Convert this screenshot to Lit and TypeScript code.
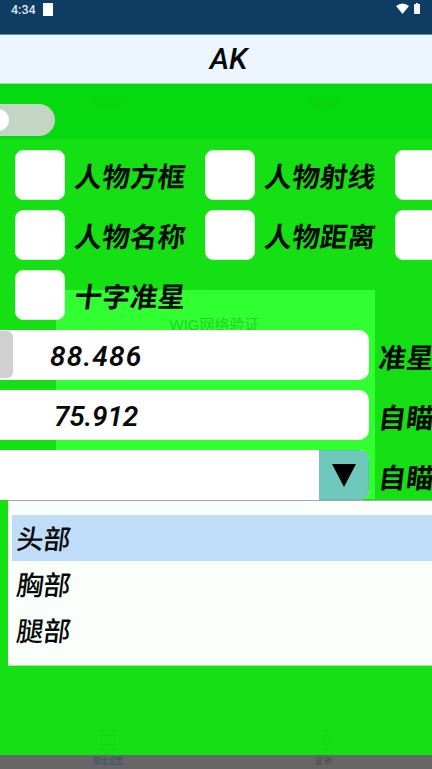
import { LitElement, html, css } from "lit";
import { customElement } from "lit/decorators.js";

@customElement("app-root")
export class AppRoot extends LitElement {
  static styles = css`
    :host { display: flex; flex-direction: column; width: 432px; height: 769px; overflow: hidden; position: relative; font-family: "Noto Sans CJK SC", "Noto Sans", sans-serif; color: #060a08; }
    .status { height: 34px; flex: none; background: #0e3c62; display: flex; align-items: flex-start; padding: 0 11px; box-sizing: border-box; color: #dfe6ec; }
    .time { font: 500 12.5px/20px Roboto, sans-serif; width: 32px; }
    .notif { width: 10px; height: 13px; margin-top: 3px; background: #fff; }
    .sys { margin-left: auto; display: flex; gap: 5px; margin-top: 3px; margin-right: 1px; }
    .header { height: 50px; flex: none; box-sizing: border-box; background: #edf5fe; border-top: 1px solid #6f8ca6; border-bottom: 1px solid #a9d8a0; display: flex; align-items: center; justify-content: center; padding-left: 25px; }
    .title { font: italic 500 30px/1 Roboto, sans-serif; color: #05080a; }
    .main { flex: 1; position: relative; overflow: hidden; background: linear-gradient(#05d90f 55px, #14e014 55px); }
    .ghost { position: absolute; color: #10cf14; font-size: 7.5px; line-height: 10px; white-space: nowrap; }
    .g1 { left: 93px; top: 13px; }
    .g2 { left: 308px; top: 13px; }
    .dialog { position: absolute; left: 56px; top: 206px; width: 319px; height: 209px; background: #32ff32; }
    .dialog-title { position: absolute; left: 0; right: 0; top: 25px; text-align: center; font: 400 15px/20px "Liberation Sans", "Noto Sans CJK SC", sans-serif; color: #1bd622; transform: translateX(-1px); }
    .g-icon { position: absolute; top: 651px; width: 14px; height: 10px; border: 1px solid #11d414; box-sizing: border-box; }
    .gi1 { left: 101px; }
    .gi2 { left: 322px; border-radius: 50%; width: 10px; }
    .content { position: relative; display: flex; flex-direction: column; }
    .toggle-row { height: 66px; padding-top: 20px; box-sizing: border-box; }
    .toggle { width: 87px; height: 32px; margin-left: -32px; border-radius: 16px; background: #c3d5c3; position: relative; }
    .knob { position: absolute; left: 19px; top: 5px; width: 22px; height: 22px; border-radius: 50%; background: #fff; }
    .checks { display: grid; grid-template-columns: repeat(3, 190px); grid-auto-rows: 50px; row-gap: 10px; padding-left: 15px; width: 600px; }
    .check { display: flex; align-items: center; gap: 10px; white-space: nowrap; }
    .check .label { margin-top: 2px; }
    .box { flex: none; width: 50px; height: 50px; box-sizing: border-box; border-radius: 8px; background: #fff; border: 1px solid #dbe8db; }
    .label { display: inline-block; font: 700 27.5px/1 "Noto Sans CJK SC", "Noto Sans", sans-serif; letter-spacing: 0.2px; transform: skewX(-7deg); }
    .fields { display: flex; flex-direction: column; gap: 10px; margin-top: 10px; }
    .field { display: flex; align-items: center; gap: 10px; height: 50px; white-space: nowrap; }
    .field .label { margin-top: 4px; }
    .input { position: relative; flex: none; width: 369px; height: 50px; box-sizing: border-box; background: #fff; border-radius: 0 10px 10px 0; display: flex; align-items: center; }
    .value { font: italic 600 28px/1 Roboto, sans-serif; letter-spacing: 1.2px; color: #0a0a0a; margin-top: 4px; }
    .v1 { margin-left: 50px; }
    .v2 { margin-left: 54px; letter-spacing: -0.2px; }
    .thumb { position: absolute; left: 0; top: 1px; width: 13px; height: 47px; background: #d0d0d0; border-radius: 0 6px 6px 0; }
    .drop { justify-content: flex-end; }
    .arrow { width: 50px; height: 50px; box-sizing: border-box; background: #6fc8bc; border-radius: 0 10px 10px 0; border: 1px solid #64bdb0; border-left: none; display: flex; align-items: center; justify-content: center; }
    .popup { position: absolute; left: 8px; top: 416px; width: 440px; height: 166px; box-sizing: border-box; background: #fbfffc; border-top: 1px solid #a5a5a5; border-bottom: 1px solid #a8e8a0; padding-top: 14px; padding-left: 4px; }
    .item { height: 46px; box-sizing: border-box; display: flex; align-items: center; padding: 0 0 1px 5px; }
    .item span { display: inline-block; font: 500 27px/1 "Noto Sans CJK SC", "Noto Sans", sans-serif; transform: skewX(-7deg); }
    .item.sel { background: #bfdcf9; }
    .footer { height: 14px; flex: none; background: #666666; position: relative; font-size: 7.5px; line-height: 12px; color: #3c4c70; white-space: nowrap; }
    .footer span { position: absolute; top: 0; }
    .f1 { left: 93px; }
    .f2 { left: 315px; color: #474747; }
  `;

  private check(label: string) {
    return html`<div class="check"><div class="box"></div>${label ? html`<span class="label">${label}</span>` : ""}</div>`;
  }

  render() {
    return html`
      <div class="status">
        <span class="time">4:34</span>
        <div class="notif"></div>
        <div class="sys">
          <svg width="13" height="11" viewBox="0 0 13 11"><path d="M0 3 Q6.5 -2 13 3 L6.5 11 Z" fill="#fff"/></svg>
          <svg width="6" height="11" viewBox="0 0 6 11"><path d="M2 0h2v1h2v10H0V1h2z" fill="#fff" opacity=".95"/></svg>
        </div>
      </div>
      <div class="header"><span class="title">AK</span></div>
      <div class="main">
        <span class="ghost g1">基本功能</span>
        <span class="ghost g2">高级功能</span>
        <div class="g-icon gi1"></div>
        <div class="g-icon gi2"></div>
        <div class="dialog">
          <div class="dialog-title">WIG网络验证</div>
        </div>
        <div class="content">
          <div class="toggle-row"><div class="toggle"><div class="knob"></div></div></div>
          <div class="checks">
            ${this.check("人物方框")}${this.check("人物射线")}${this.check("")}
            ${this.check("人物名称")}${this.check("人物距离")}${this.check("")}
            ${this.check("十字准星")}
          </div>
          <div class="fields">
            <div class="field"><div class="input"><div class="thumb"></div><span class="value v1">88.486</span></div><span class="label">准星</span></div>
            <div class="field"><div class="input"><span class="value v2">75.912</span></div><span class="label">自瞄</span></div>
            <div class="field"><div class="input drop"><div class="arrow"><svg width="24" height="23" viewBox="0 0 24 23"><path d="M0 0H24L12 23Z" fill="#000"/></svg></div></div><span class="label">自瞄</span></div>
          </div>
        </div>
        <div class="popup">
          <div class="item sel"><span>头部</span></div>
          <div class="item"><span>胸部</span></div>
          <div class="item"><span>腿部</span></div>
        </div>
      </div>
      <div class="footer"><span class="f1">脚本设置</span><span class="f2">说 明</span></div>
    `;
  }
}
